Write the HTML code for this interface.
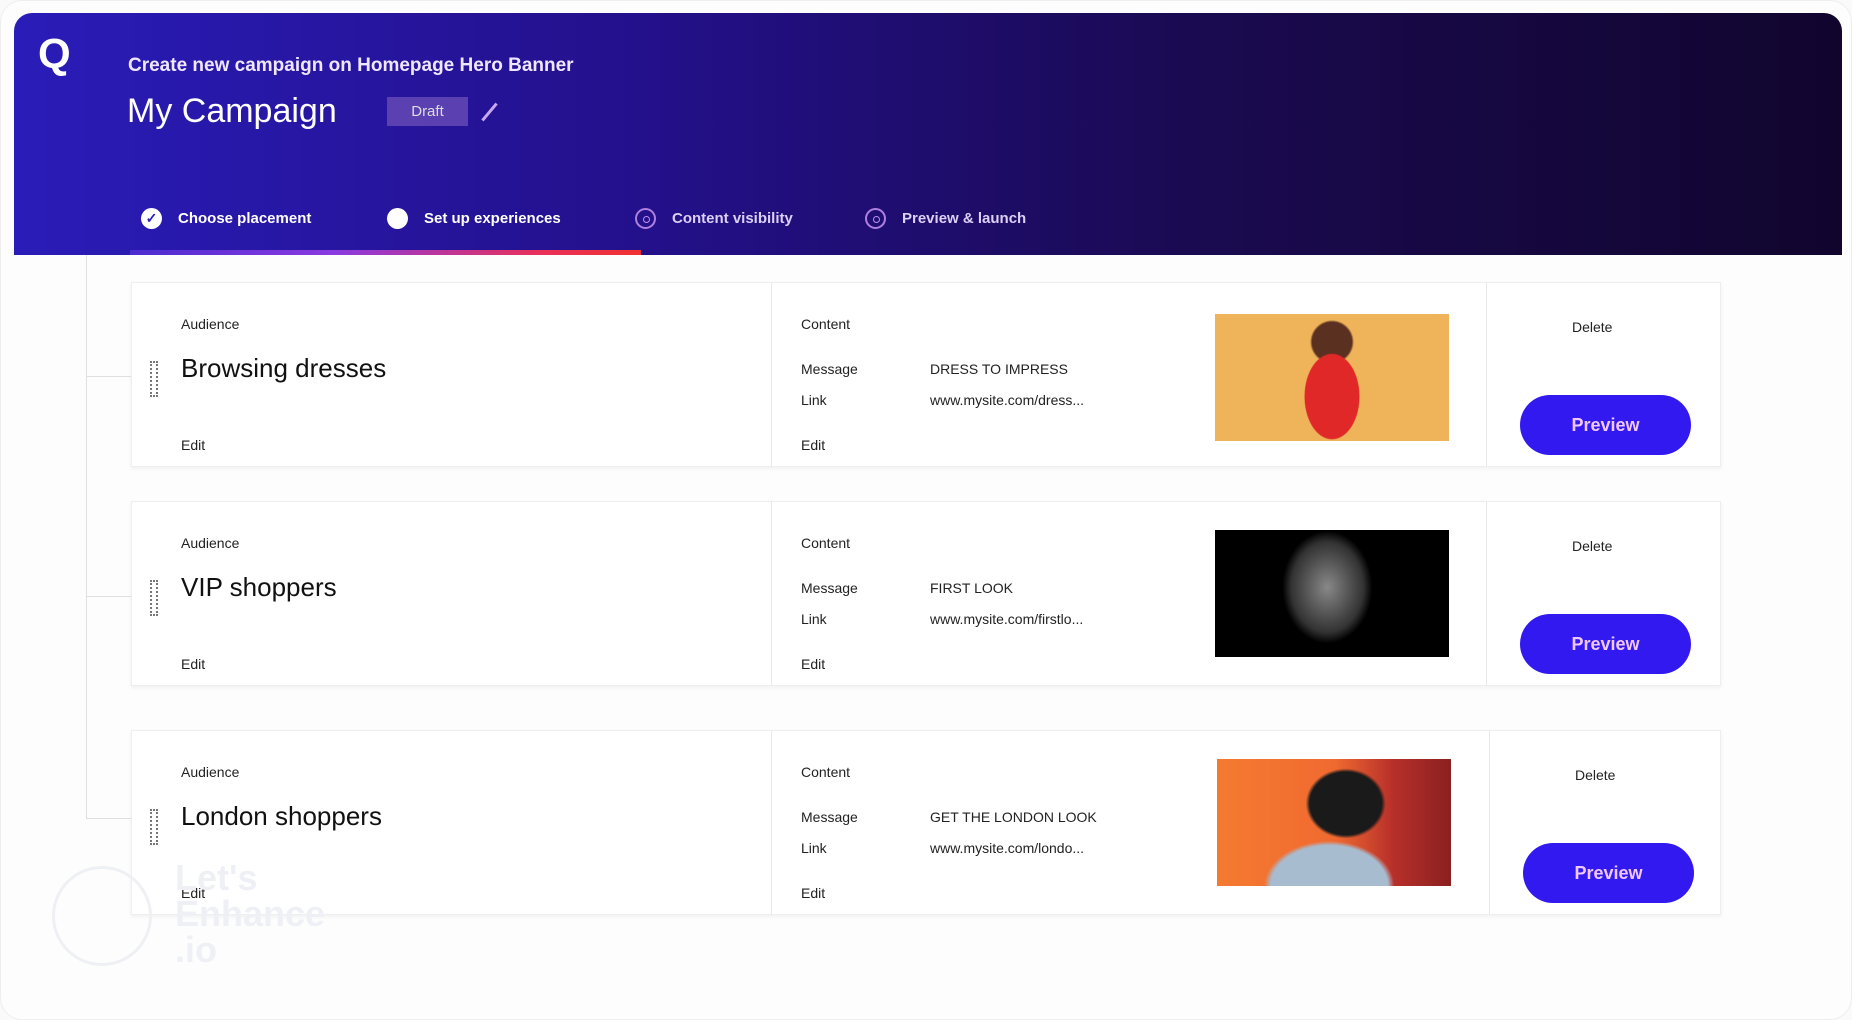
<!DOCTYPE html>
<html><head><meta charset="utf-8"><style>
*{margin:0;padding:0;box-sizing:border-box}
body{width:1852px;height:1020px;background:#fafafa;font-family:"Liberation Sans",sans-serif;position:relative;overflow:hidden}
.frame{position:absolute;left:0;top:0;width:1852px;height:1020px;background:#fdfdfd;border:1px solid #eee;border-radius:22px}
.hdr{position:absolute;left:14px;top:13px;width:1828px;height:242px;border-radius:18px 18px 0 0;background:linear-gradient(90deg,#2a1cb8 0%,#23108a 35%,#1a0a50 65%,#11052e 100%)}
.a{position:absolute;white-space:nowrap}
.w{color:#fff}
.card{position:absolute;left:131px;width:1590px;height:185px;background:#fff;border:1px solid #eee;box-shadow:0 2px 4px rgba(0,0,0,.05)}
.div1,.div2{position:absolute;top:0;bottom:0;width:1px;background:#e8e8e8}
.sm{font-size:14px;color:#222}
.ttl{font-size:26px;color:#111}
.btn{position:absolute;width:171px;height:60px;border-radius:30px;background:#3219f0;color:#f0c8ff;font-size:18px;font-weight:bold;text-align:center;line-height:60px}
.step{position:absolute;top:208px;width:21px;height:21px;border-radius:50%}
.dot::after{content:"";position:absolute;left:6px;top:6px;width:5px;height:5px;border-radius:50%;border:1px solid #c090f0}
</style></head><body>
<div class="frame"></div>
<div class="hdr"></div>
<div class="a w" style="left:38px;top:30px;font-size:42px;font-weight:bold">Q</div>
<div class="a w" style="left:128px;top:55px;font-size:19px;font-weight:bold;color:#f0e6ff">Create new campaign on Homepage Hero Banner</div>
<div class="a w" style="left:127px;top:92px;font-size:34px">My Campaign</div>
<div class="a" style="left:387px;top:97px;width:81px;height:29px;background:#5a40b0;color:#ddd;font-size:15px;text-align:center;line-height:29px">Draft</div>
<div class="a" style="left:488px;top:101px;width:3px;height:22px;background:#c8a8f0;transform:rotate(40deg)"></div>
<div class="step" style="left:141px;background:#fff;color:#2a1cb8;font-size:14px;text-align:center;line-height:21px;font-weight:bold">✓</div>
<div class="a w" style="left:178px;top:210px;font-size:15px;font-weight:bold">Choose placement</div>
<div class="step" style="left:387px;background:#fff"></div>
<div class="a w" style="left:424px;top:210px;font-size:15px;font-weight:bold">Set up experiences</div>
<div class="step dot" style="left:635px;border:2px solid #b080e0"></div>
<div class="a w" style="left:672px;top:210px;font-size:15px;font-weight:bold;color:#ddd0f5">Content visibility</div>
<div class="step dot" style="left:865px;border:2px solid #b080e0"></div>
<div class="a w" style="left:902px;top:210px;font-size:15px;font-weight:bold;color:#ddd0f5">Preview &amp; launch</div>
<div class="a" style="left:130px;top:250px;width:511px;height:5px;background:linear-gradient(90deg,#4a2cd0,#8a3ae0 40%,#e8305a 80%,#f03030)"></div>

<div class="a" style="left:86px;top:255px;width:1px;height:563px;background:#e0e0e0"></div>
<div class="a" style="left:86px;top:376px;width:45px;height:1px;background:#e0e0e0"></div>
<div class="a" style="left:86px;top:596px;width:45px;height:1px;background:#e0e0e0"></div>
<div class="a" style="left:86px;top:818px;width:45px;height:1px;background:#e0e0e0"></div>

<div class="card" style="top:282px">
 <div class="div1" style="left:639px"></div><div class="div2" style="left:1354px"></div>
 <div class="a" style="left:18px;top:78px;width:8px;height:36px;border:2px dotted #777"></div>
 <div class="a sm" style="left:49px;top:33px">Audience</div>
 <div class="a ttl" style="left:49px;top:70px">Browsing dresses</div>
 <div class="a sm" style="left:49px;top:154px">Edit</div>
 <div class="a sm" style="left:669px;top:33px">Content</div>
 <div class="a sm" style="left:669px;top:78px">Message</div>
 <div class="a sm" style="left:798px;top:78px">DRESS TO IMPRESS</div>
 <div class="a sm" style="left:669px;top:109px">Link</div>
 <div class="a sm" style="left:798px;top:109px">www.mysite.com/dress...</div>
 <div class="a sm" style="left:669px;top:154px">Edit</div>
 <div class="a" style="left:1083px;top:31px;width:234px;height:127px;background:radial-gradient(ellipse 45px 70px at 50% 65%,#e02828 60%,transparent 62%),radial-gradient(circle 22px at 50% 22%,#5a3020 90%,transparent),#efb45a"></div>
 <div class="a sm" style="left:1440px;top:36px">Delete</div>
 <div class="btn" style="left:1388px;top:112px">Preview</div>
</div>
<div class="card" style="top:501px">
 <div class="div1" style="left:639px"></div><div class="div2" style="left:1354px"></div>
 <div class="a" style="left:18px;top:78px;width:8px;height:36px;border:2px dotted #777"></div>
 <div class="a sm" style="left:49px;top:33px">Audience</div>
 <div class="a ttl" style="left:49px;top:70px">VIP shoppers</div>
 <div class="a sm" style="left:49px;top:154px">Edit</div>
 <div class="a sm" style="left:669px;top:33px">Content</div>
 <div class="a sm" style="left:669px;top:78px">Message</div>
 <div class="a sm" style="left:798px;top:78px">FIRST LOOK</div>
 <div class="a sm" style="left:669px;top:109px">Link</div>
 <div class="a sm" style="left:798px;top:109px">www.mysite.com/firstlo...</div>
 <div class="a sm" style="left:669px;top:154px">Edit</div>
 <div class="a" style="left:1083px;top:28px;width:234px;height:127px;background:radial-gradient(ellipse 60px 75px at 48% 45%,#888 0%,#333 60%,transparent 75%),#000"></div>
 <div class="a sm" style="left:1440px;top:36px">Delete</div>
 <div class="btn" style="left:1388px;top:112px">Preview</div>
</div>
<div class="card" style="top:730px">
 <div class="div1" style="left:639px"></div><div class="div2" style="left:1357px"></div>
 <div class="a" style="left:18px;top:78px;width:8px;height:36px;border:2px dotted #777"></div>
 <div class="a sm" style="left:49px;top:33px">Audience</div>
 <div class="a ttl" style="left:49px;top:70px">London shoppers</div>
 <div class="a sm" style="left:49px;top:154px">Edit</div>
 <div class="a sm" style="left:669px;top:33px">Content</div>
 <div class="a sm" style="left:669px;top:78px">Message</div>
 <div class="a sm" style="left:798px;top:78px">GET THE LONDON LOOK</div>
 <div class="a sm" style="left:669px;top:109px">Link</div>
 <div class="a sm" style="left:798px;top:109px">www.mysite.com/londo...</div>
 <div class="a sm" style="left:669px;top:154px">Edit</div>
 <div class="a" style="left:1085px;top:28px;width:234px;height:127px;background:radial-gradient(ellipse 40px 35px at 55% 35%,#1a1a1a 90%,transparent),radial-gradient(ellipse 65px 45px at 48% 100%,#a8bcd0 90%,transparent),linear-gradient(90deg,#f57a30,#f06a30 50%,#b8302a 75%,#8a2020)"></div>
 <div class="a sm" style="left:1443px;top:36px">Delete</div>
 <div class="btn" style="left:1391px;top:112px">Preview</div>
</div>
<div class="a" style="left:52px;top:866px;width:100px;height:100px;border:3px solid #eef0f4;border-radius:50%"></div>
<div class="a" style="left:175px;top:860px;font-size:36px;font-weight:bold;color:#eef0f5;line-height:36px">Let's<br>Enhance<br>.io</div>
</body></html>
